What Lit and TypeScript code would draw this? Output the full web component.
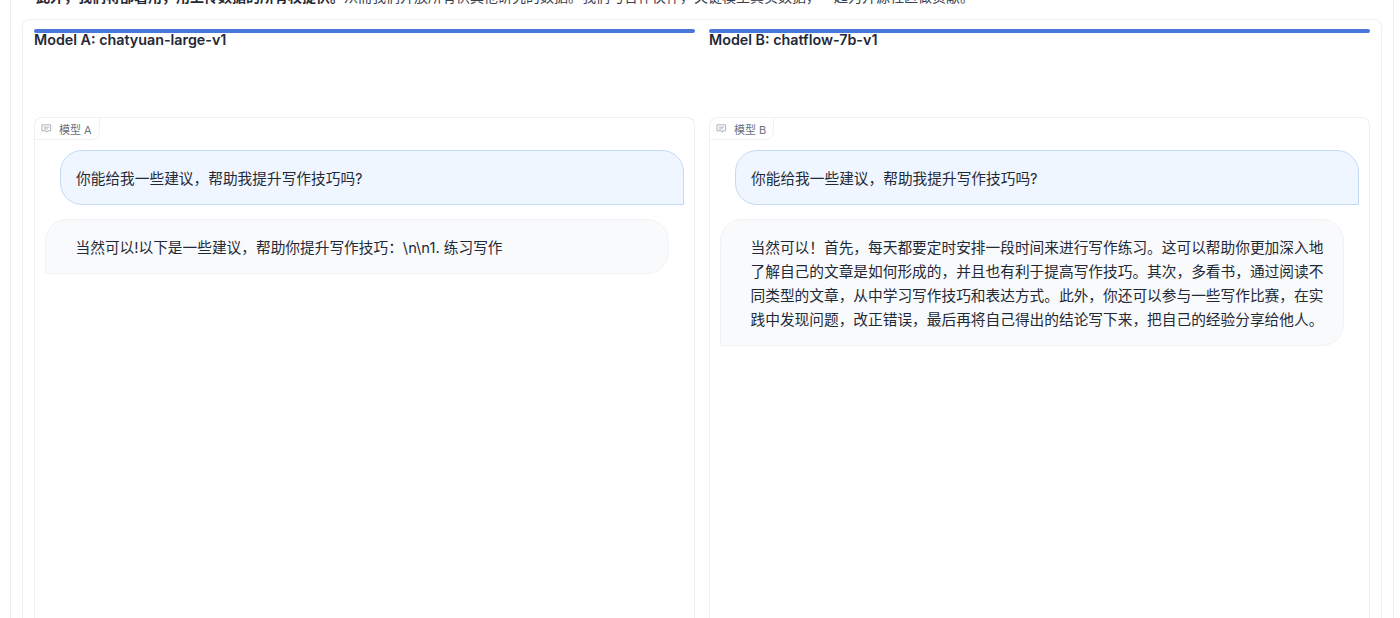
import { LitElement, html, css } from "lit";
import { customElement } from "lit/decorators.js";

const Q = "你能给我一些建议，帮助我提升写作技巧吗?";
const A = "当然可以!以下是一些建议，帮助你提升写作技巧：\\n\\n1. 练习写作";
const B = "当然可以！首先，每天都要定时安排一段时间来进行写作练习。这可以帮助你更加深入地了解自己的文章是如何形成的，并且也有利于提高写作技巧。其次，多看书，通过阅读不同类型的文章，从中学习写作技巧和表达方式。此外，你还可以参与一些写作比赛，在实践中发现问题，改正错误，最后再将自己得出的结论写下来，把自己的经验分享给他人。";

@customElement("app-root")
export class AppRoot extends LitElement {
  static styles = css`
    :host {
      display: block;
      height: 618px;
      overflow: hidden;
      font-family: "Inter", "Noto Sans CJK SC", sans-serif;
      color: #1f2937;
      background: #fff;
    }
    .page {
      height: 618px;
      box-sizing: border-box;
      margin: 0 6px 0 10px;
      border-left: 1px solid #ececf0;
      border-right: 1px solid #ececf0;
      padding: 0 11px;
      display: flex;
      flex-direction: column;
    }
    .intro {
      height: 19px;
      margin-top: -11px;
      flex: none;
      font-size: 14px;
      line-height: 16px;
      white-space: nowrap;
      overflow: hidden;
      color: #374151;
    }
    .intro b { font-weight: 600; color: #1f2937; }
    .box {
      flex: 1;
      margin-top: 11px;
      border: 1px solid #f1f1f4;
      border-bottom: none;
      border-radius: 8px 8px 0 0;
      padding: 9px 11px 0;
      display: grid;
      grid-template-columns: 661px 661px;
      column-gap: 14px;
      min-height: 0;
    }
    .col { display: flex; flex-direction: column; min-height: 0; }
    .bar { height: 4px; background: #4a78d8; border-radius: 2px; flex: none; }
    .name {
      height: 84px;
      flex: none;
      font-size: 14.3px;
      font-weight: 600;
      line-height: 13px;
      color: #1f2937;
    }
    .chat {
      flex: 1;
      border: 1px solid #eeeff2;
      border-bottom: none;
      border-radius: 8px 8px 0 0;
      position: relative;
      padding: 32px 10px 0;
      display: flex;
      flex-direction: column;
      gap: 14px;
    }
    .tag {
      position: absolute;
      left: -1px;
      top: -1px;
      height: 23px;
      box-sizing: border-box;
      display: flex;
      align-items: center;
      gap: 7px;
      padding: 0 7px 0 6px;
      font-size: 11px;
      color: #6b7280;
      background: #fff;
      border: 1px solid #f1f1f4;
      border-radius: 8px 0 8px 0;
    }
    .tag svg { width: 11px; height: 11px; display: block; }
    .msg {
      box-sizing: border-box;
      width: 624px;
      font-size: 14.7px;
      line-height: 24px;
      color: #1f2937;
      padding: 16px 16px 13px 29.5px;
    }
    .q {
      align-self: flex-end;
      padding-left: 15px;
      background: #f0f6ff;
      border: 1px solid #c3daf5;
      border-radius: 22px 22px 0 22px;
    }
    .a {
      align-self: flex-start;
      width: 623.5px;
      background: #f9fafb;
      border: 1px solid #f1f2f5;
      border-radius: 22px 22px 22px 0;
    }
  `;

  private panel(name: string, tag: string, reply: string) {
    return html`<section class="col">
      <div class="bar"></div>
      <div class="name">${name}</div>
      <div class="chat">
        <div class="tag">
          <svg viewBox="0 0 24 24" fill="none" stroke="#9ca3af" stroke-width="1.8" stroke-linejoin="round" stroke-linecap="round">
            <path d="M3 4h18v13h-6l-2 3-2-3H3z" />
            <path d="M7 9h10M7 13h7" />
          </svg>
          <span>${tag}</span>
        </div>
        <div class="msg q">${Q}</div>
        <div class="msg a">${reply}</div>
      </div>
    </section>`;
  }

  render() {
    return html`<div class="page">
      <div class="intro"><b>一此外，我们将部署用，用上传数据的所有权提供。</b>从而我们开放所有供其他研究的数据。我们与合作伙伴，关键模型真实数据，一起为开源社区做贡献。</div>
      <div class="box">
        ${this.panel("Model A: chatyuan-large-v1", "模型 A", A)}
        ${this.panel("Model B: chatflow-7b-v1", "模型 B", B)}
      </div>
    </div>`;
  }
}
